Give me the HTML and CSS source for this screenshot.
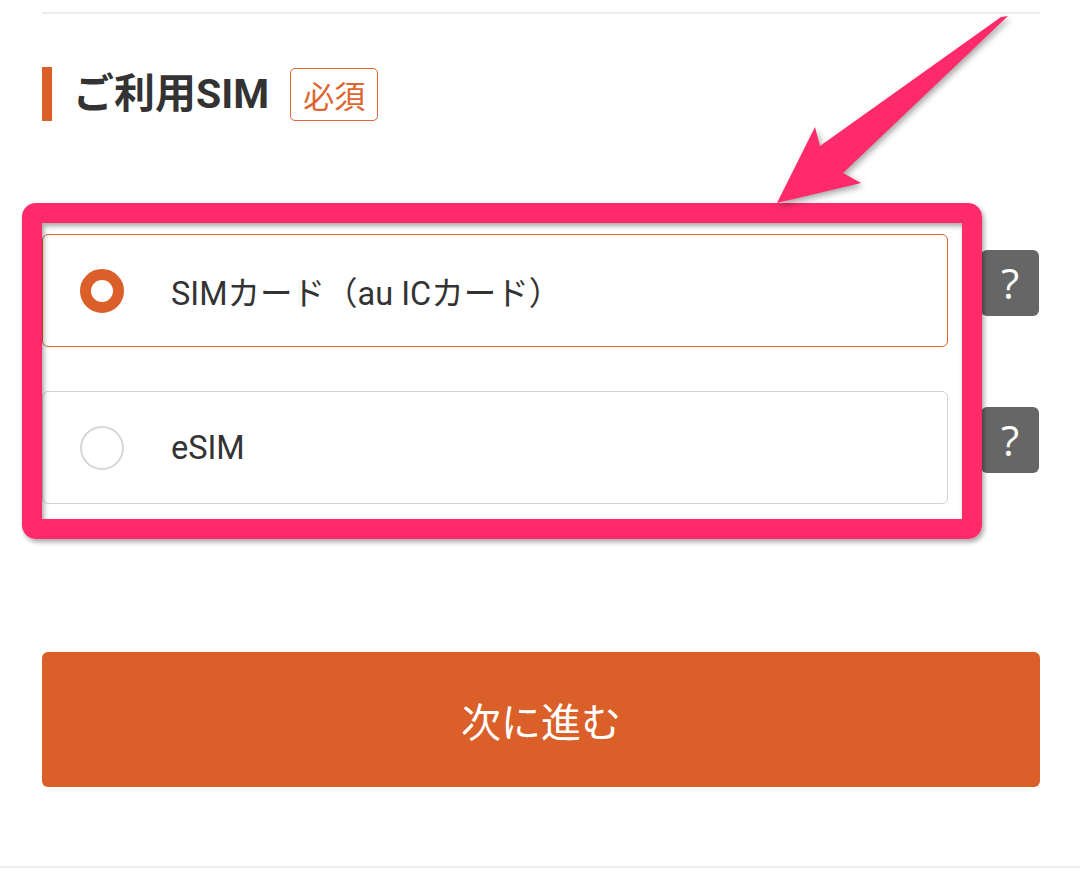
FILE: index.html
```html
<!DOCTYPE html>
<html lang="ja">
<head>
<meta charset="utf-8">
<title>ご利用SIM</title>
<link rel="stylesheet" href="styles.css">
</head>
<body>
<div class="page">
  <div class="rule-top"></div>
  <div class="section-head">
    <span class="head-bar"></span>
    <h2 class="head-title">ご利用SIM</h2>
    <span class="badge">必須</span>
  </div>
  <div class="options">
    <div class="opt-row">
      <label class="opt opt-selected"><span class="radio radio-on"></span><span class="opt-label">SIMカード（au ICカード）</span></label>
      <button class="help" type="button">?</button>
    </div>
    <div class="opt-row">
      <label class="opt"><span class="radio"></span><span class="opt-label">eSIM</span></label>
      <button class="help" type="button">?</button>
    </div>
    <div class="highlight"></div>
  </div>
  <button class="next" type="button">次に進む</button>
</div>
<div class="rule-bottom"></div>
<svg class="arrow" width="1080" height="872" viewBox="0 0 1080 872" xmlns="http://www.w3.org/2000/svg">
  <polygon points="777,203 815,127 820,146 1001,17 1008,16 843,173 861,183" fill="#fe2a6a"/>
</svg>
</body>
</html>
```

FILE: styles.css
```css
html, body {
  margin: 0;
  padding: 0;
  background: #ffffff;
}
body {
  position: relative;
  width: 1080px;
  height: 872px;
  overflow: hidden;
  font-family: Roboto, "Noto Sans CJK JP", sans-serif;
  color: #333333;
}
.page {
  padding-left: 42px;
  width: 998px;
}
.rule-top {
  margin-top: 12px;
  height: 2px;
  background: #ececec;
}
.section-head {
  margin-top: 53px;
  height: 54px;
  display: flex;
  align-items: center;
}
.head-bar {
  width: 10px;
  height: 54px;
  background: #da5f29;
}
.head-title {
  margin: 0 0 0 21px;
  font-size: 41px;
  font-weight: 700;
  line-height: 1;
  color: #333333;
}
.badge {
  margin-left: 21px;
  box-sizing: border-box;
  width: 88px;
  height: 53px;
  border: 1.5px solid #dd6530;
  border-radius: 5px;
  color: #dd6530;
  font-family: "Noto Sans CJK JP", sans-serif;
  font-size: 31px;
  display: flex;
  align-items: center;
  justify-content: center;
  line-height: 1;
}
.options {
  position: relative;
  margin-top: 113px;
  display: flex;
  flex-direction: column;
  gap: 44px;
}
.opt-row {
  display: flex;
  align-items: flex-start;
}
.opt {
  box-sizing: border-box;
  width: 906px;
  height: 113px;
  border: 1.5px solid #d2d2d2;
  border-radius: 6px;
  display: flex;
  align-items: center;
  padding-left: 37px;
  background: #ffffff;
}
.opt-selected {
  border-color: #dc6430;
}
.radio {
  box-sizing: border-box;
  width: 44px;
  height: 44px;
  border-radius: 50%;
  border: 2px solid #d6d6d6;
  flex: none;
}
.radio-on {
  border: 11px solid #da5f29;
}
.opt-label {
  margin-left: 47px;
  font-size: 32.5px;
  color: #333333;
}
.help {
  margin: 16px 0 0 33px;
  width: 58px;
  height: 66px;
  border: none;
  border-radius: 6px;
  background: #666666;
  color: #ffffff;
  font-family: "Open Sans", sans-serif;
  font-size: 42px;
  line-height: 66px;
  padding: 0;
  text-align: center;
}
.highlight {
  position: absolute;
  left: -20px;
  top: -31px;
  box-sizing: border-box;
  width: 960px;
  height: 336px;
  border: 20px solid #fe2a6a;
  border-radius: 14px;
  box-shadow: 2px 3px 5px rgba(0, 0, 0, 0.35), inset 2px 3px 5px rgba(0, 0, 0, 0.35);
  pointer-events: none;
}
.next {
  margin-top: 148px;
  width: 998px;
  height: 135px;
  border: none;
  border-radius: 6px;
  background: #da5f29;
  color: #ffffff;
  font-family: "Noto Sans CJK JP", sans-serif;
  font-size: 40px;
  display: block;
  padding: 0;
}
.rule-bottom {
  margin-top: 79px;
  height: 2px;
  background: #eeeeee;
}
.arrow {
  position: absolute;
  left: 0;
  top: 0;
  pointer-events: none;
  filter: drop-shadow(2px 3px 3px rgba(0, 0, 0, 0.35));
}
```
